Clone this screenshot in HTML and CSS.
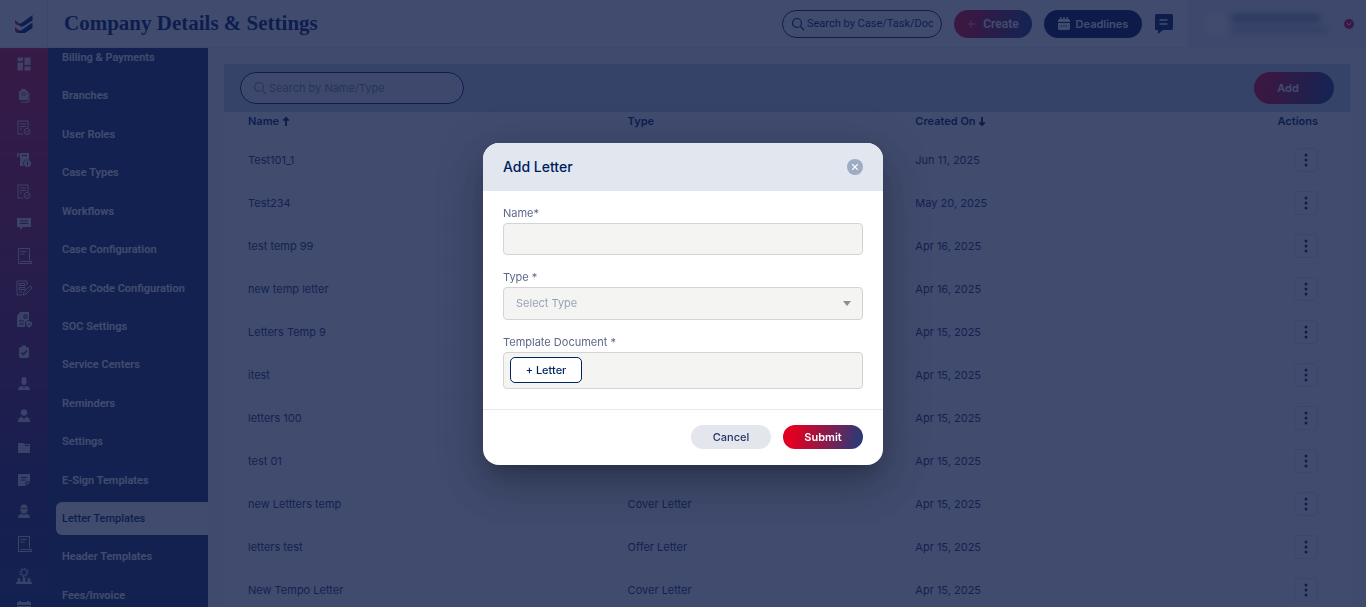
FILE: index.html
```html
<!DOCTYPE html>
<html lang="en">
<head>
    <meta charset="UTF-8">
    <meta name="viewport" content="width=device-width, initial-scale=1.0">
    <title>Company Details &amp; Settings</title>
    <link rel="stylesheet" href="styles.css">
</head>
<body>
    <div class="app">
        <header class="topbar">
            <a class="logo" href="#" aria-label="Home">
                <svg width="18" height="18" viewBox="0 0 18 18">
                    <path d="M0 5l4 3.500V10H2L0 8z" fill="#e4002b"/>
                    <path d="M0 12l4 3.500V18H2l-2-2z" fill="#e4002b"/>
                    <path d="M3 8.500h3L17.500 0v5.500L8 11.500H5z" fill="#001c5c"/>
                    <path d="M3 15.500h3l11.500-8V13L10 18H4z" fill="#001c5c"/>
                </svg>
            </a>
            <h1>Company Details &amp; Settings</h1>
            <div class="top-actions">
                <label class="search top-search">
                    <svg width="14" height="14" viewBox="0 0 14 14" fill="none" stroke="currentColor" stroke-width="1.200"><circle cx="6" cy="6" r="4.500"/><path d="M9.300 9.300L13 13"/></svg>
                    <input type="text" placeholder="Search by Case/Task/Document" aria-label="Search by Case/Task/Document">
                </label>
                <button class="btn btn-create"><svg width="8" height="8" viewBox="0 0 8 8" stroke="#ff5b78" stroke-width="1.500"><path d="M4 0v8M0 4h8"/></svg>Create</button>
                <button class="btn btn-deadlines"><svg width="12" height="13" viewBox="0 0 12 13"><path d="M1 2h1V0h1.500v2h1.750V0h1.500v2H8.500V0H10v2h1l1 1v2H0V3z" fill="#fff"/><path d="M0 6h12v6l-1 1H1l-1-1z" fill="#fff"/><path d="M2.500 9h7" stroke="#0a1e55" stroke-dasharray="1.500 1"/></svg>Deadlines</button>
                <button class="icon-btn" aria-label="Messages"><svg width="20" height="20" viewBox="0 0 20 20"><path d="M2 0h15q2 0 2 2v12q0 2-2 2H9l-5 4v-4H1V2q0-2 1-2z" fill="#001c5c"/><path d="M5.500 6h8M5.500 10h8" stroke="#fff" stroke-width="1.300"/></svg></button>
            </div>
            <div class="user">
                <span class="avatar"></span>
                <span class="user-lines"><i class="line dark"></i><i class="line"></i></span>
                <button class="user-toggle" aria-label="Account menu"><svg width="10" height="10" viewBox="0 0 10 10"><circle cx="5" cy="5" r="5" fill="#e8003d"/><path d="M3 4l2 2 2-2" fill="none" stroke="#fff"/></svg></button>
            </div>
        </header>

        <div class="shell">
            <nav class="rail" aria-label="Modules">
                <a href="#" aria-label="Dashboard"><svg viewBox="0 0 16 16"><path d="M1.500 1.500H7V5H1.500zM1.500 6.500H7v8H1.500zM8.500 1.500h6V9h-6zM8.500 10.500h6v4h-6z" fill="currentColor"/></svg></a>
                <a href="#" aria-label="Cases"><svg viewBox="0 0 16 16"><path d="M3 3h2V1h5v2h2v9H3z" fill="currentColor"/><path d="M13 5v9H5" fill="none" stroke="currentColor"/><path d="M5 5h5M5 7h5" stroke="#8b1444" stroke-width=".8"/></svg></a>
                <a href="#" aria-label="Tasks"><svg viewBox="0 0 16 16" fill="none" stroke="currentColor"><path d="M7 14H2V1h10v7M4 4h6M4 6.500h6M4 9h2"/><circle cx="11" cy="11.500" r="3"/><path d="M9.500 11.500l1 1 2-2"/></svg></a>
                <a href="#" aria-label="Billing"><svg viewBox="0 0 16 16"><path d="M1 1h12v7a4 4 0 0 0-5 6H4V5H1z" fill="currentColor"/><path d="M3 1v4M6 3.500h5" stroke="#6d1648"/><circle cx="11.500" cy="11.500" r="3.500" fill="currentColor"/><path d="M11.500 9.500v4" stroke="#6d1648"/></svg></a>
                <a href="#" aria-label="Approvals"><svg viewBox="0 0 16 16" fill="none" stroke="currentColor"><path d="M7 14H2V1h10v7M4 4h6M4 6.500h6M4 9h2"/><circle cx="11" cy="11.500" r="3"/><path d="M9.500 11.500l1 1 2-2"/></svg></a>
                <a href="#" aria-label="Chat"><svg viewBox="0 0 16 16"><path d="M1 2h14v9H7l-3 3v-3H1z" fill="currentColor"/><path d="M4 5h8M4 7.500h8" stroke="#6d1a52"/></svg></a>
                <a href="#" aria-label="Invoices"><svg viewBox="0 0 16 16" fill="none" stroke="currentColor"><path d="M2.500 13.500V.5h11v12M4.500 13.500h11v2h-13v-2M4.500 3.500h6M4.500 6h4"/></svg></a>
                <a href="#" aria-label="Forms"><svg viewBox="0 0 16 16" fill="none" stroke="currentColor"><path d="M6 15H1V1h10v4M3 3.500h6v2H3zM3 7.500h6v2H3zM3 12h3M7 15l1-3 6-6 2 2-6 6z"/></svg></a>
                <a href="#" aria-label="Reports"><svg viewBox="0 0 16 16"><path d="M4 0h9v8l-4 2v5H1V4z" fill="currentColor"/><path d="M8 3h3v3H8zM3 9h5M3 12h5" fill="none" stroke="#45205c"/><path d="M10 10l3-1 3 1v3l-3 3-3-3z" fill="currentColor"/><path d="M11.500 12l1 1 2-2" fill="none" stroke="#45205c"/></svg></a>
                <a href="#" aria-label="Checklist"><svg viewBox="0 0 16 16"><rect x="3" y="3" width="10" height="11" rx="2" fill="currentColor"/><path d="M6 1.500h4v2H6z" fill="currentColor"/><path d="M5.500 8.500l2 2 3.500-4" fill="none" stroke="#3d2262" stroke-width="1.300"/></svg></a>
                <a href="#" aria-label="Clients"><svg viewBox="0 0 16 16" fill="currentColor"><path d="M5.500 4a2.500 3 0 0 1 5 0v2a2.500 3 0 0 1-5 0zM2 14q0-4 5-4l1 3 1-3q5 0 5 4z"/></svg></a>
                <a href="#" aria-label="Employees"><svg viewBox="0 0 16 16" fill="currentColor"><circle cx="8" cy="4.500" r="3.200"/><path d="M2 14q0-5 4-5l2 2 2-2q4 0 4 5z"/></svg></a>
                <a href="#" aria-label="Documents"><svg viewBox="0 0 16 16"><path d="M2 3h5l1.500 1H14v9H2z" fill="currentColor"/><path d="M9 5.500h4" stroke="#252c68"/></svg></a>
                <a href="#" aria-label="Notes"><svg viewBox="0 0 16 16"><path d="M2 2h12v8l-4 4H2z" fill="currentColor"/><path d="M5 5.500h6M5 8h5M10 14v-4h4" fill="none" stroke="#252c68"/></svg></a>
                <a href="#" aria-label="Users"><svg viewBox="0 0 16 16"><path d="M4.500 4a3.500 3.500 0 0 1 7 0v2a3.500 3.500 0 0 1-7 0zM2 14q0-4 4-4l2 1 2-1q4 0 4 4z" fill="currentColor"/><path d="M5 4.500h6" stroke="#252c68" stroke-width=".7"/></svg></a>
                <a href="#" aria-label="Letters"><svg viewBox="0 0 16 16" fill="none" stroke="currentColor"><path d="M2.500 13.500V.5h11v12M4.500 13.500h11v2h-13v-2M4.500 3.500h6M4.500 6h4"/></svg></a>
                <a href="#" aria-label="Team settings"><svg viewBox="0 0 16 16"><circle cx="8" cy="4.500" r="3" fill="none" stroke="currentColor" stroke-width="1"/><circle cx="8" cy="4.500" r="4" fill="none" stroke="currentColor" stroke-width="1.200" stroke-dasharray="1.500 1.600"/><path d="M0 16q0-3 3-3t3 2q0-3 2-3t2 3q0-2 3-2t3 3z" fill="currentColor"/><circle cx="3" cy="11.500" r="1.500" fill="currentColor"/><circle cx="13" cy="11.500" r="1.500" fill="currentColor"/><circle cx="8" cy="10.500" r="1.500" fill="currentColor"/></svg></a>
                <a href="#" aria-label="Calendar"><svg viewBox="0 0 16 16"><path d="M1 2h2V1h2v1h6V1h2v1h2v3H1zM1 6h14v9H1z" fill="currentColor"/></svg></a>
            </nav>

            <nav class="sidebar" aria-label="Settings">
                <a href="#">Billing &amp; Payments</a>
                <a href="#">Branches</a>
                <a href="#">User Roles</a>
                <a href="#">Case Types</a>
                <a href="#">Workflows</a>
                <a href="#">Case Configuration</a>
                <a href="#">Case Code Configuration</a>
                <a href="#">SOC Settings</a>
                <a href="#">Service Centers</a>
                <a href="#">Reminders</a>
                <a href="#">Settings</a>
                <a href="#">E-Sign Templates</a>
                <a href="#" class="active">Letter Templates</a>
                <a href="#">Header Templates</a>
                <a href="#">Fees/Invoice</a>
            </nav>

            <main class="content">
                <div class="toolbar">
                    <label class="search list-search">
                        <svg width="14" height="14" viewBox="0 0 14 14" fill="none" stroke="currentColor" stroke-width="1.200"><circle cx="6" cy="6" r="4.500"/><path d="M9.300 9.300L13 13"/></svg>
                        <input type="text" placeholder="Search by Name/Type" aria-label="Search by Name/Type">
                    </label>
                    <button class="btn btn-add">Add</button>
                </div>
                <div class="table-wrap">
                    <table>
                        <colgroup><col class="col-name"><col class="col-type"><col><col class="col-actions"></colgroup>
                        <thead>
                            <tr>
                                <th>Name <svg class="sort" viewBox="0 0 8 10"><path d="M4 10V1M1 4l3-3 3 3"/></svg></th>
                                <th>Type</th>
                                <th>Created On <svg class="sort" viewBox="0 0 8 10"><path d="M4 0v9M1 6l3 3 3-3"/></svg></th>
                                <th>Actions</th>
                            </tr>
                        </thead>
                        <tbody id="letters"></tbody>
                    </table>
                </div>
            </main>
        </div>
    </div>

    <div class="overlay">
        <form class="modal" role="dialog" aria-labelledby="modalTitle">
            <div class="modal-header">
                <h2 id="modalTitle">Add Letter</h2>
                <button type="button" class="close" aria-label="Close"><svg width="6" height="6" viewBox="0 0 6 6" stroke="#fff" stroke-width="1.200"><path d="M0 0l6 6M6 0L0 6"/></svg></button>
            </div>
            <div class="modal-body">
                <div class="field">
                    <label for="name">Name*</label>
                    <input type="text" id="name">
                </div>
                <div class="field">
                    <label for="type">Type *</label>
                    <select id="type">
                        <option>Select Type</option>
                        <option>Cover Letter</option>
                        <option>Offer Letter</option>
                    </select>
                </div>
                <div class="field">
                    <label for="letterBtn">Template Document *</label>
                    <div class="upload"><button type="button" id="letterBtn">+ Letter</button></div>
                </div>
            </div>
            <div class="modal-footer">
                <button type="button" class="btn btn-cancel">Cancel</button>
                <button type="submit" class="btn btn-submit">Submit</button>
            </div>
        </form>
    </div>

    <script src="script.js"></script>
</body>
</html>
```

FILE: styles.css
```css
* {
    box-sizing: border-box;
}

body {
    margin: 0;
    font-family: Inter, "Liberation Sans", sans-serif;
    font-size: 11px;
    color: #1b2a5c;
    overflow: hidden;
}

button, input, select {
    font-family: inherit;
    font-size: 11px;
}

button {
    border: none;
    padding: 0;
    background: none;
    cursor: pointer;
}

a {
    text-decoration: none;
}

.app {
    height: 100vh;
    display: flex;
    flex-direction: column;
    background: #fafafb;
}

/* top bar */
.topbar {
    flex: none;
    height: 48px;
    display: flex;
    align-items: center;
    background: #fff;
    border-bottom: 1px solid #f0f1f4;
}

.logo {
    width: 48px;
    height: 48px;
    display: flex;
    align-items: center;
    justify-content: center;
    border-right: 1px solid #e6e8ee;
}

h1 {
    margin: 0 auto 0 16px;
    font-family: "Liberation Serif", serif;
    font-size: 21px;
    font-weight: bold;
    color: #001c5c;
    white-space: nowrap;
}

.top-actions {
    display: flex;
    align-items: center;
    gap: 12px;
    margin-right: 12px;
}

.search {
    display: flex;
    align-items: center;
    border: 1px solid #001c5c;
    border-radius: 16px;
    background: #fff;
}

.search svg {
    flex: none;
}

.search input {
    flex: 1;
    min-width: 0;
    border: none;
    outline: none;
    padding: 0;
    background: transparent;
    color: inherit;
}

.search input::placeholder {
    color: inherit;
    opacity: 1;
}

.top-search {
    width: 160px;
    height: 28px;
    padding: 0 8px;
    gap: 2px;
    color: #001c5c;
}

.top-search input {
    font-family: Roboto, sans-serif;
}

.btn {
    display: flex;
    align-items: center;
    justify-content: center;
    gap: 8px;
    border-radius: 16px;
    font-weight: 600;
    color: #fff;
}

.btn-create,
.btn-add,
.btn-submit {
    background: linear-gradient(100deg, #e00022 15%, #2a3a78 95%);
}

.btn-create {
    width: 78px;
    height: 28px;
    font-family: Roboto, sans-serif;
    font-size: 12px;
}

.btn-deadlines {
    width: 98px;
    height: 28px;
    gap: 6px;
    background: #001250;
}

.icon-btn {
    display: flex;
    width: 22px;
}

.user {
    width: 178px;
    height: 47px;
    padding: 0 12px 0 16px;
    display: flex;
    align-items: center;
    gap: 6px;
    background: #eef0f4;
}

.avatar {
    width: 22px;
    height: 20px;
    border-radius: 6px;
    background: #fff;
    filter: blur(2px);
}

.user-lines {
    flex: 1;
    filter: blur(3px);
}

.line {
    display: block;
    width: 96px;
    height: 8px;
    margin: 4px 0;
    background: #c3c8d5;
}

.line.dark {
    width: 88px;
    background: #9aa3ba;
}

.user-toggle {
    display: flex;
}

/* left navigation */
.shell {
    flex: 1;
    min-height: 0;
    display: flex;
}

.rail {
    flex: none;
    width: 48px;
    overflow: hidden;
    display: flex;
    flex-direction: column;
    background: linear-gradient(#d00a38, #901850 35%, #3a2468 75%, #203072);
}

.rail a {
    flex: none;
    height: 32px;
    display: flex;
    align-items: center;
    justify-content: center;
    color: rgba(255, 255, 255, 0.8);
}

.rail svg {
    width: 16px;
    height: 16px;
}

.sidebar {
    flex: none;
    width: 160px;
    margin-top: -7px;
    margin-bottom: -5px;
    padding-left: 8px;
    display: flex;
    flex-direction: column;
    justify-content: space-between;
    background: #203068;
    clip-path: inset(7px 0 5px 0);
}

.sidebar a {
    height: 33px;
    padding-left: 6px;
    border-radius: 6px 0 0 6px;
    font-family: Roboto, sans-serif;
    font-weight: 600;
    line-height: 33px;
    color: #fff;
}

.sidebar .active {
    background: #fff;
    font-weight: 500;
    color: #001c5c;
}

/* letter templates list */
.content {
    flex: 1;
    min-width: 0;
    padding: 16px 16px 0;
    overflow: hidden;
}

.toolbar {
    height: 48px;
    padding: 0 16px;
    display: flex;
    align-items: center;
    justify-content: space-between;
    background: #ccd4e2;
}

.list-search {
    width: 224px;
    height: 32px;
    padding: 0 12px;
    gap: 2px;
    background: #eef1f6;
    color: #7e89a6;
}

.btn-add {
    width: 80px;
    height: 32px;
    padding-right: 12px;
}

.table-wrap {
    display: flow-root;
    padding: 0 16px;
    background: #fff;
}

table {
    width: 100%;
    margin-top: -6px;
    table-layout: fixed;
    border-collapse: separate;
    border-spacing: 0 6px;
}

.col-name {
    width: 34.7%;
}

.col-type {
    width: 26.3%;
}

.col-actions {
    width: 80px;
}

th, td {
    padding: 0 8px;
    text-align: left;
}

th {
    height: 23px;
    line-height: 19px;
    vertical-align: top;
    font-weight: 600;
    color: #001c5c;
}

td {
    height: 37px;
    border-top: 1px solid #f7f7fa;
    border-bottom: 1px solid #f7f7fa;
    color: #25325e;
}

th:last-child,
td:last-child {
    padding-right: 16px;
    text-align: right;
}

.sort {
    width: 8px;
    height: 9px;
    fill: none;
    stroke: #001050;
    stroke-width: 2;
    vertical-align: -1px;
}

.more {
    width: 24px;
    height: 24px;
    border: 1px solid #e2e5ec;
    border-radius: 4px;
    vertical-align: middle;
}

.more svg {
    display: block;
    margin: auto;
}

/* add letter dialog */
.overlay {
    position: fixed;
    inset: 0;
    display: flex;
    align-items: center;
    justify-content: center;
    background: rgba(16, 30, 74, 0.8);
}

.modal {
    width: 400px;
    overflow: hidden;
    border-radius: 16px;
    background: #fff;
    box-shadow: 0 11px 15px -7px rgba(0, 0, 0, 0.2), 0 24px 38px 3px rgba(0, 0, 0, 0.14), 0 9px 46px 8px rgba(0, 0, 0, 0.12);
}

.modal-header {
    height: 48px;
    padding: 0 20px;
    display: flex;
    align-items: center;
    justify-content: space-between;
    background: #e1e6ef;
}

h2 {
    margin: 0;
    font-size: 14px;
    font-weight: 500;
    color: #001c5c;
}

.close {
    width: 16px;
    height: 16px;
    display: flex;
    align-items: center;
    justify-content: center;
    border-radius: 50%;
    background: #9dacc3;
}

.modal-body {
    padding: 14px 20px 20px;
    display: flex;
    flex-direction: column;
    gap: 14px;
}

.field {
    display: flex;
    flex-direction: column;
    gap: 2px;
}

.field label {
    line-height: 16px;
    color: #5d6889;
}

.field input,
.field select,
.upload {
    height: 32px;
    padding: 0 12px;
    border: 1px solid #d3d4d6;
    border-radius: 4px;
    background: #f4f4f2;
}

.field select {
    height: 33px;
    appearance: none;
    color: #98a3b8;
    background: #f4f4f2 url("data:image/svg+xml,%3Csvg xmlns='http://www.w3.org/2000/svg' width='8' height='5'%3E%3Cpath d='M0 0h8L4 5z' fill='%238d8f93'/%3E%3C/svg%3E") no-repeat right 11px center;
}

.upload {
    height: 37px;
    padding: 0 6px;
    display: flex;
    align-items: center;
}

.upload button {
    width: 72px;
    height: 26px;
    border: 1px solid #00245f;
    border-radius: 5px;
    background: #fff;
    color: #00245f;
    font-weight: 500;
}

.modal-footer {
    padding: 15px 20px 16px;
    display: flex;
    justify-content: flex-end;
    gap: 12px;
    border-top: 1px solid #e9e9eb;
}

.modal-footer .btn {
    width: 80px;
    height: 24px;
}

.modal-footer .btn-cancel {
    background: #e4e6ee;
    color: #243463;
    font-weight: 500;
}
```

FILE: script.js
```js
const letters = [
    ['Test101_1', '', 'Jun 11, 2025'],
    ['Test234', '', 'May 20, 2025'],
    ['test temp 99', '', 'Apr 16, 2025'],
    ['new temp letter', '', 'Apr 16, 2025'],
    ['Letters Temp 9', '', 'Apr 15, 2025'],
    ['itest', '', 'Apr 15, 2025'],
    ['letters 100', '', 'Apr 15, 2025'],
    ['test 01', '', 'Apr 15, 2025'],
    ['new Lettters temp', 'Cover Letter', 'Apr 15, 2025'],
    ['letters test', 'Offer Letter', 'Apr 15, 2025'],
    ['New Tempo Letter', 'Cover Letter', 'Apr 15, 2025']
];

const dots = '<svg width="4" height="14" viewBox="0 0 4 14" fill="#001c5c"><circle cx="2" cy="2" r="1.500"/><circle cx="2" cy="7" r="1.500"/><circle cx="2" cy="12" r="1.500"/></svg>';
const tbody = document.getElementById('letters');

letters.forEach(([name, type, created]) => {
    const row = document.createElement('tr');
    [name, type, created].forEach(text => {
        const cell = document.createElement('td');
        cell.textContent = text;
        row.appendChild(cell);
    });
    const actions = document.createElement('td');
    actions.innerHTML = `<button class="more" aria-label="Actions">${dots}</button>`;
    row.appendChild(actions);
    tbody.appendChild(row);
});
```
